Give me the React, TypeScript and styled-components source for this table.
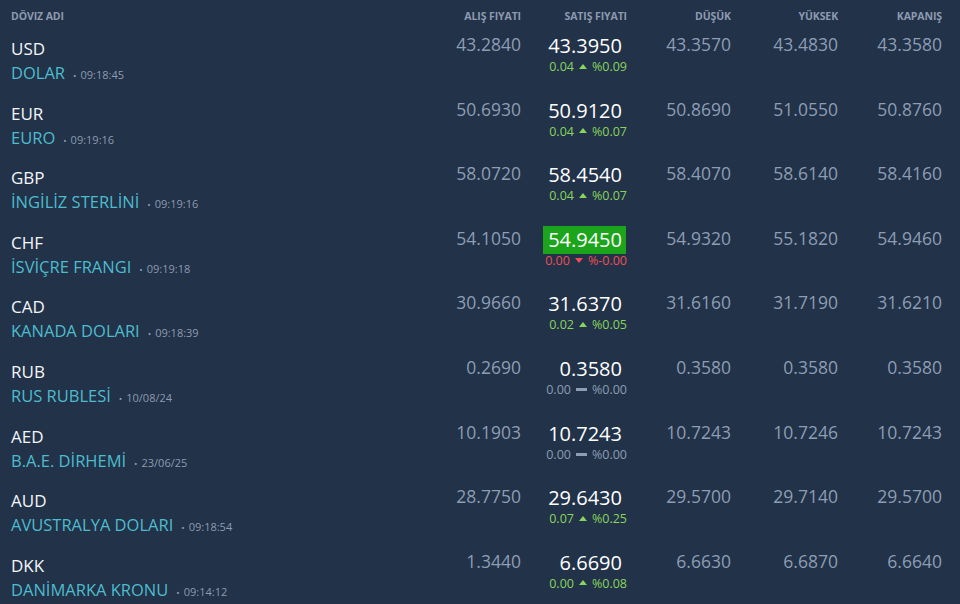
import React from "react"
import styled, { createGlobalStyle } from "styled-components"

const GlobalStyle = createGlobalStyle`
  html, body {
    margin: 0;
    padding: 0;
    background: #213249;
  }
  body {
    font-family: "Open Sans", "Liberation Sans", sans-serif;
  }
`

type Trend = "up" | "down" | "flat"

interface Rate {
  code: string
  name: string
  time: string
  buy: string
  sell: string
  change: string
  percent: string
  trend: Trend
  low: string
  high: string
  close: string
  flash?: boolean
}

const rates: Rate[] = [
  { code: "USD", name: "DOLAR", time: "09:18:45", buy: "43.2840", sell: "43.3950", change: "0.04", percent: "%0.09", trend: "up", low: "43.3570", high: "43.4830", close: "43.3580" },
  { code: "EUR", name: "EURO", time: "09:19:16", buy: "50.6930", sell: "50.9120", change: "0.04", percent: "%0.07", trend: "up", low: "50.8690", high: "51.0550", close: "50.8760" },
  { code: "GBP", name: "İNGİLİZ STERLİNİ", time: "09:19:16", buy: "58.0720", sell: "58.4540", change: "0.04", percent: "%0.07", trend: "up", low: "58.4070", high: "58.6140", close: "58.4160" },
  { code: "CHF", name: "İSVİÇRE FRANGI", time: "09:19:18", buy: "54.1050", sell: "54.9450", change: "0.00", percent: "%-0.00", trend: "down", low: "54.9320", high: "55.1820", close: "54.9460", flash: true },
  { code: "CAD", name: "KANADA DOLARI", time: "09:18:39", buy: "30.9660", sell: "31.6370", change: "0.02", percent: "%0.05", trend: "up", low: "31.6160", high: "31.7190", close: "31.6210" },
  { code: "RUB", name: "RUS RUBLESİ", time: "10/08/24", buy: "0.2690", sell: "0.3580", change: "0.00", percent: "%0.00", trend: "flat", low: "0.3580", high: "0.3580", close: "0.3580" },
  { code: "AED", name: "B.A.E. DİRHEMİ", time: "23/06/25", buy: "10.1903", sell: "10.7243", change: "0.00", percent: "%0.00", trend: "flat", low: "10.7243", high: "10.7246", close: "10.7243" },
  { code: "AUD", name: "AVUSTRALYA DOLARI", time: "09:18:54", buy: "28.7750", sell: "29.6430", change: "0.07", percent: "%0.25", trend: "up", low: "29.5700", high: "29.7140", close: "29.5700" },
  { code: "DKK", name: "DANİMARKA KRONU", time: "09:14:12", buy: "1.3440", sell: "6.6690", change: "0.00", percent: "%0.08", trend: "up", low: "6.6630", high: "6.6870", close: "6.6640" },
]

const trendColor: Record<Trend, string> = {
  up: "#8ad45c",
  down: "#ec4f55",
  flat: "#8d9db3",
}

const Table = styled.div`
  width: 960px;
  height: 604px;
  overflow: hidden;
  background: #213249;
`

const columns = "1fr 105px 106px 104px 107px 104px"

const HeaderRow = styled.div`
  display: grid;
  grid-template-columns: ${columns};
  padding: 9px 18px 0 11px;
  height: 23px;
`

const HeaderCell = styled.div<{ $align?: "left" | "right" }>`
  font-size: 10.5px;
  font-weight: 700;
  color: #8e9ab0;
  text-transform: uppercase;
  text-align: ${(p) => p.$align || "right"};
  line-height: 14px;
  letter-spacing: -0.1px;
`

const Row = styled.div`
  display: grid;
  grid-template-columns: ${columns};
  padding: 0 18px 0 11px;
  height: 64.6px;
  box-sizing: border-box;
  border-bottom: 1px solid #22344b;
`

const NameCell = styled.div`
  display: flex;
  flex-direction: column;
  padding-top: 7px;
`

const Code = styled.div`
  font-size: 17px;
  line-height: 20px;
  color: #f4f6f9;
`

const NameLine = styled.div`
  display: flex;
  align-items: baseline;
  margin-top: 3px;
`

const Name = styled.span`
  font-size: 16.5px;
  line-height: 22px;
  color: #4ebccd;
`

const Time = styled.span`
  font-size: 11px;
  color: #8e9ab0;
  margin-left: 8px;
  &::before {
    content: "•";
    margin-right: 4px;
    font-size: 9px;
  }
`

const ValueCell = styled.div`
  text-align: right;
  font-size: 17.5px;
  line-height: 22px;
  color: #8d9db3;
  padding-top: 1px;
`

const SellCell = styled.div`
  display: flex;
  flex-direction: column;
  align-items: flex-end;
  padding-top: 0;
`

const SellValue = styled.span<{ $flash?: boolean }>`
  font-size: 20px;
  line-height: 28px;
  padding: 0 4px 0 5px;
  margin-right: 1px;
  color: #ffffff;
  background: ${(p) => (p.$flash ? "#1ba41c" : "transparent")};
`

const Change = styled.div<{ $trend: Trend }>`
  display: flex;
  align-items: center;
  gap: 5px;
  font-size: 12.5px;
  line-height: 15px;
  margin-top: -1px;
  color: ${(p) => trendColor[p.$trend]};
`

const Arrow = styled.span<{ $trend: Trend }>`
  display: inline-block;
  ${(p) =>
    p.$trend === "up"
      ? `border-left: 4px solid transparent; border-right: 4px solid transparent; border-bottom: 5px solid ${trendColor.up}; margin-top: -1px;`
      : p.$trend === "down"
      ? `border-left: 4px solid transparent; border-right: 4px solid transparent; border-top: 5px solid ${trendColor.down}; margin-top: 1px;`
      : `width: 11px; height: 3px; background: ${trendColor.flat};`}
`

export default function App() {
  return (
    <>
      <GlobalStyle />
      <Table>
        <HeaderRow>
          <HeaderCell $align="left">Döviz Adı</HeaderCell>
          <HeaderCell>Alış Fiyatı</HeaderCell>
          <HeaderCell>Satış Fiyatı</HeaderCell>
          <HeaderCell>Düşük</HeaderCell>
          <HeaderCell>Yüksek</HeaderCell>
          <HeaderCell>Kapanış</HeaderCell>
        </HeaderRow>
        {rates.map((r) => (
          <Row key={r.code}>
            <NameCell>
              <Code>{r.code}</Code>
              <NameLine>
                <Name>{r.name}</Name>
                <Time>{r.time}</Time>
              </NameLine>
            </NameCell>
            <ValueCell>{r.buy}</ValueCell>
            <SellCell>
              <SellValue $flash={r.flash}>{r.sell}</SellValue>
              <Change $trend={r.trend}>
                <span>{r.change}</span>
                <Arrow $trend={r.trend} />
                <span>{r.percent}</span>
              </Change>
            </SellCell>
            <ValueCell>{r.low}</ValueCell>
            <ValueCell>{r.high}</ValueCell>
            <ValueCell>{r.close}</ValueCell>
          </Row>
        ))}
      </Table>
    </>
  )
}
